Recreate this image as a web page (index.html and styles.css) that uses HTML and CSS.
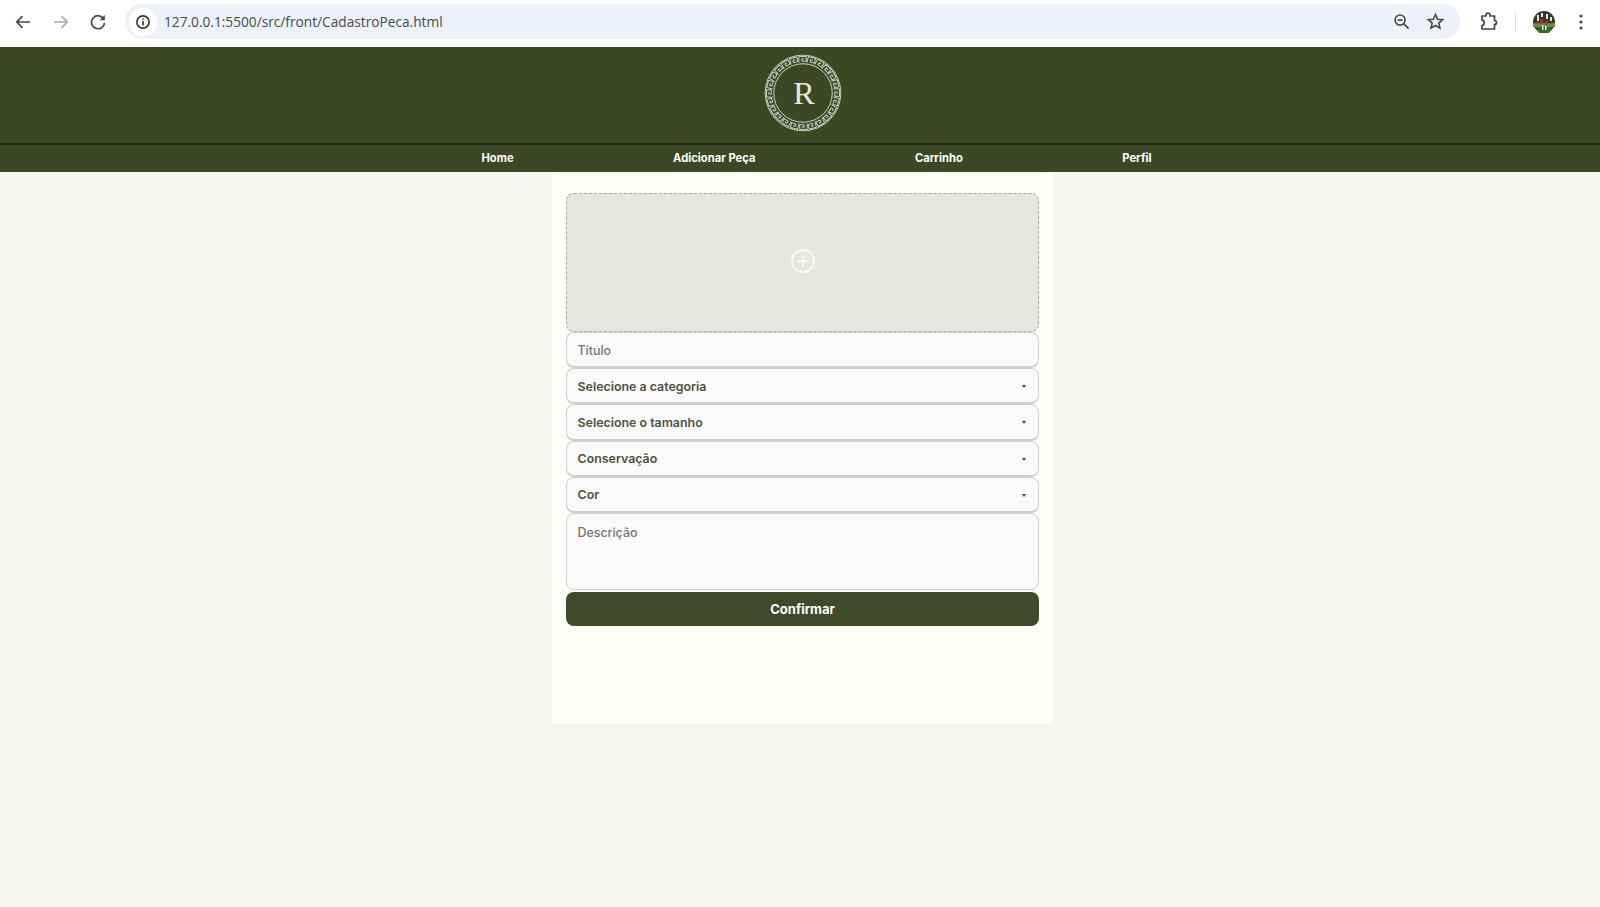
FILE: index.html
```html
<!DOCTYPE html>
<html lang="pt-BR">

<head>
    <meta charset="UTF-8">
    <meta name="viewport" content="width=device-width, initial-scale=1.0">
    <title>Cadastro de Peça</title>
    <link rel="stylesheet" href="styles.css">
</head>

<body>
    <!-- barra do navegador -->
    <div class="browser">
        <div class="browser-nav">
            <svg class="ico" viewBox="0 0 20 20"><path d="M17 10H4M9.500 4.200 3.800 10l5.700 5.800" /></svg>
            <svg class="ico ico-off" viewBox="0 0 20 20"><path d="M3 10h13M10.500 4.200l5.700 5.800-5.700 5.800" /></svg>
            <svg class="ico" viewBox="0 0 20 20"><path d="M15.800 7.200A6.500 6.500 0 1 0 16.500 11" /><path class="solid" d="M16.800 3v5.200h-5.200z" /></svg>
        </div>
        <div class="omnibox">
            <span class="site-info">
                <svg viewBox="0 0 20 20"><circle cx="10" cy="10" r="6.800" /><path d="M10 9v5M10 6v1.600" /></svg>
            </span>
            <span class="url">127.0.0.1:5500/src/front/CadastroPeca.html</span>
            <svg class="ico ico-small" viewBox="0 0 20 20"><circle cx="8.500" cy="8.500" r="5.300" /><path d="M12.500 12.500 17.500 17.500M6 8.500h5" /></svg>
            <svg class="ico ico-small" viewBox="0 0 20 20"><path d="M10 2.600l2.200 5 5.400.5-4.100 3.600 1.200 5.300L10 14.200l-4.700 2.800 1.200-5.300-4.100-3.600 5.400-.5z" /></svg>
        </div>
        <svg class="ico ico-ext" viewBox="0 0 20 20"><path d="M4 4h4V3.200a2 2 0 0 1 4 0V4h4.500v4.500a2 2 0 0 1 0 4V17H4v-3.500a2.800 2.800 0 0 0 0-5.500z" /></svg>
        <span class="divider"></span>
        <svg class="avatar" viewBox="0 0 22 22">
            <circle cx="11" cy="11" r="11" fill="#2f3a2c" />
            <path d="M0 12h22v4H0z" fill="#4f9a3c" />
            <path d="M3 16h16l-3 6H6z" fill="#2f6a2e" />
            <path d="M4 4h2v6H4zM8 2h2v4H8zM13 3h2v5h-2zM17 6h2v4h-2z" fill="#e8e4e0" />
            <path d="M7 8h3v5H7zM12 10h3v4h-3zM3 11h3v2H3zM17 11h3v2h-3z" fill="#a8343a" />
            <path d="M9 14h1.500v5H9zM12 15h1.500v4H12z" fill="#e8e4e0" />
        </svg>
        <svg class="menu" viewBox="0 0 4 18"><circle cx="2" cy="3" r="1.600" /><circle cx="2" cy="9" r="1.600" /><circle cx="2" cy="15" r="1.600" /></svg>
    </div>

    <header class="topo">
        <svg class="logo" viewBox="-40 -40 80 80">
            <defs>
                <path id="key" d="M-4.200 -31.200V-37.400H3.400V-32.600H-1.200V-35H1.200" />
                <g id="k2"><use href="#key" /><use href="#key" transform="rotate(15)" /></g>
                <g id="k4"><use href="#k2" /><use href="#k2" transform="rotate(30)" /></g>
                <g id="k8"><use href="#k4" /><use href="#k4" transform="rotate(60)" /></g>
            </defs>
            <circle class="ring" r="38.800" />
            <circle class="ring" r="30" />
            <g class="keys">
                <use href="#k8" />
                <use href="#k8" transform="rotate(120)" />
                <use href="#k8" transform="rotate(240)" />
            </g>
            <text class="logo-letra" x="1" y="11">R</text>
        </svg>
    </header>

    <nav class="menu-site">
        <a href="#">Home</a>
        <a href="#">Adicionar Peça</a>
        <a href="#">Carrinho</a>
        <a href="#">Perfil</a>
    </nav>

    <main class="painel">
        <form class="form-peca">
            <label class="upload">
                <svg viewBox="0 0 26 26"><circle cx="13" cy="13" r="11" /><path d="M13 7.500v11M7.500 13h11" /></svg>
            </label>
            <input class="campo" type="text" placeholder="Título">
            <div class="campo campo-select">Selecione a categoria</div>
            <div class="campo campo-select">Selecione o tamanho</div>
            <div class="campo campo-select">Conservação</div>
            <div class="campo campo-select">Cor</div>
            <textarea class="campo campo-texto" placeholder="Descrição"></textarea>
            <button class="btn-confirmar" type="button">Confirmar</button>
        </form>
    </main>
</body>

</html>
```

FILE: styles.css
```css
* {
    box-sizing: border-box;
    margin: 0;
    padding: 0;
}

body {
    height: 907px;
    overflow: hidden;
    display: flex;
    flex-direction: column;
    background-color: #f6f5f0;
    font-family: Inter, 'Noto Sans', sans-serif;
}

/* navegador */
.browser {
    height: 47px;
    display: flex;
    align-items: center;
    padding: 0 15px 4px 13px;
    background-color: #fff;
}

.browser-nav {
    display: flex;
    gap: 17.5px;
    margin-right: 17px;
}

.ico {
    width: 20px;
    height: 20px;
    fill: none;
    stroke: #474747;
    stroke-width: 1.7;
    flex-shrink: 0;
}

.ico-off {
    stroke: #a9abad;
}

.solid {
    fill: #474747;
    stroke: none;
}

.omnibox {
    width: 1335px;
    height: 35px;
    display: flex;
    align-items: center;
    gap: 15px;
    padding: 0 15px 0 4px;
    border-radius: 18px;
    background-color: #edf2fa;
}

.site-info {
    width: 28px;
    height: 28px;
    display: flex;
    align-items: center;
    justify-content: center;
    border-radius: 50%;
    background-color: #fff;
}

.site-info svg {
    width: 18px;
    height: 18px;
    fill: none;
    stroke: #333;
    stroke-width: 1.8;
}

.url {
    flex: 1;
    margin-left: -8px;
    font-family: 'Open Sans', sans-serif;
    font-size: 13.7px;
    color: #474a4d;
}

.ico-small {
    width: 19px;
    height: 19px;
}

.ico-ext {
    margin-left: 18px;
}

.divider {
    width: 1px;
    height: 18px;
    margin: 0 17px 0 17px;
    background-color: #d4dce9;
}

.avatar {
    width: 22px;
    height: 22px;
}

.menu {
    width: 4px;
    height: 18px;
    margin-left: 24px;
    fill: #474747;
}

/* topo */
.topo {
    height: 98px;
    display: flex;
    justify-content: center;
    align-items: center;
    padding: 0 0 4px 6px;
    background-color: #3c4824;
    border-bottom: 2px solid #1e2a12;
}

.logo {
    width: 78px;
    height: 78px;
    fill: none;
    stroke: #cfd2c8;
}

.ring {
    stroke-width: 1;
}

.keys {
    stroke-width: 1;
}

.logo-letra {
    font-family: 'Liberation Serif', serif;
    font-size: 33px;
    text-anchor: middle;
    fill: #e6e8de;
    stroke: none;
}

.menu-site {
    height: 27px;
    display: flex;
    justify-content: center;
    align-items: center;
    gap: 159.500px;
    padding: 0 0 2px 33px;
    background-color: #3c4824;
}

.menu-site a {
    font-size: 11.200px;
    font-weight: 700;
    color: #fff;
    text-decoration: none;
}

/* formulario */
.painel {
    width: 501px;
    height: 552px;
    margin-left: 552px;
    padding: 21px 14px 0;
    background-color: #fdfef8;
}

.form-peca {
    display: flex;
    flex-direction: column;
}

.upload {
    height: 139px;
    display: flex;
    align-items: center;
    justify-content: center;
    padding-bottom: 3px;
    border: 1px dashed #a9a9a4;
    border-radius: 8px;
    background-color: #e7e6e2;
}

.upload svg {
    width: 26px;
    height: 26px;
    fill: none;
    stroke: #f8f7f4;
    stroke-width: 2;
}

.campo {
    width: 100%;
    height: 36.200px;
    padding: 1px 10.500px 0;
    border: 1px solid #cfcfcf;
    border-bottom-width: 2px;
    border-radius: 8px;
    background-color: #fafafa;
    font-family: Inter, 'Noto Sans', sans-serif;
    font-size: 12.400px;
    outline: none;
}

.campo::placeholder {
    color: #757575;
    font-weight: 500;
    opacity: 1;
}

.campo-select {
    position: relative;
    display: flex;
    align-items: center;
    font-weight: 600;
    color: #4f5343;
}

.campo-select::after {
    content: "";
    position: absolute;
    right: 12px;
    top: 16px;
    border-left: 2.500px solid transparent;
    border-right: 2.500px solid transparent;
    border-top: 3px solid #444;
}

.campo-texto {
    height: 77px;
    padding-top: 11px;
    border-bottom-width: 1px;
    resize: none;
}

.btn-confirmar {
    height: 34px;
    margin-top: 2px;
    border: none;
    border-radius: 8px;
    background-color: #3f4a2a;
    color: #fff;
    font-family: Inter, 'Noto Sans', sans-serif;
    font-size: 13px;
    font-weight: 700;
}
```
